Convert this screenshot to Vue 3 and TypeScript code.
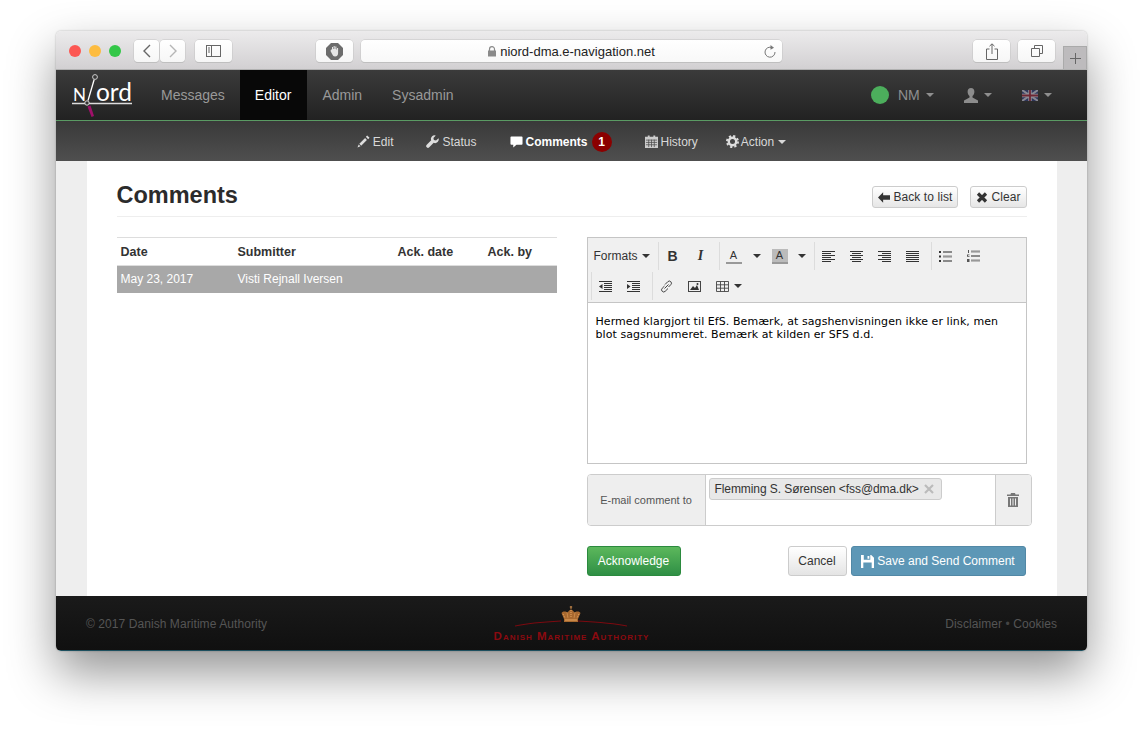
<template>
  <div class="page">
    <div class="window">
      <div class="titlebar">
        <div class="lights">
          <span class="light red"></span>
          <span class="light yellow"></span>
          <span class="light green"></span>
        </div>
        <div class="saf-pair">
          <span class="saf-btn nav-btn">
            <svg width="10" height="14" viewBox="0 0 10 14"><path d="M8 1 2 7l6 6" fill="none" stroke="#666" stroke-width="1.4" /></svg>
          </span>
          <span class="saf-btn nav-btn">
            <svg width="10" height="14" viewBox="0 0 10 14"><path d="m2 1 6 6-6 6" fill="none" stroke="#b5b5b5" stroke-width="1.4" /></svg>
          </span>
        </div>
        <span class="saf-btn side-btn">
          <svg width="15" height="12" viewBox="0 0 15 12">
            <rect x=".5" y=".5" width="14" height="11" fill="none" stroke="#666" />
            <path d="M5.5 0v12M2 3h2M2 5h2M2 7h2" stroke="#666" fill="none" />
          </svg>
        </span>
        <span class="saf-btn stop-btn">
          <svg width="17" height="17" viewBox="0 0 17 17">
            <path d="M5 0h7l5 5v7l-5 5H5l-5-5V5z" fill="#6c6c6c" />
            <path d="M5 6.5h1V4h1v2h.6V3h1.1v3h.6V3.5h1.1V6.6h.6V5h1.1v5c0 2-1 3.5-3 3.5S7 12.500 5.800 10.500L4.500 8z" fill="#e6e6e6" />
          </svg>
        </span>
        <div class="urlbar">
          <span class="url-text">
            <svg width="8" height="11" viewBox="0 0 8 11">
              <path d="M1.500 5V3.200a2.500 2.500 0 0 1 5 0V5" fill="none" stroke="#8a8a8a" stroke-width="1.200" />
              <rect y="4.500" width="8" height="6" fill="#8a8a8a" />
            </svg>
            niord-dma.e-navigation.net
          </span>
          <svg class="reload" width="12" height="13" viewBox="0 0 12 13">
            <path d="M8 2.600A5 5 0 1 0 11 7" fill="none" stroke="#777" />
            <path d="M6.500 0 10 2.700 6.500 4.800z" fill="#777" />
          </svg>
        </div>
        <span class="saf-btn share-btn">
          <svg width="12" height="17" viewBox="0 0 12 17">
            <path d="M3.500 6H.5v10.500h11V6h-3M6 11V1M3.500 3.200 6 .8l2.500 2.400" fill="none" stroke="#666" />
          </svg>
        </span>
        <span class="saf-btn tabs-btn">
          <svg width="12" height="12" viewBox="0 0 12 12">
            <path d="M3.500 3V.5h8v8H9M.5 3.500h8v8h-8z" fill="none" stroke="#666" />
          </svg>
        </span>
        <span class="new-tab">
          <svg width="11" height="11" viewBox="0 0 11 11"><path d="M5.500 0v11M0 5.500h11" stroke="#666" /></svg>
        </span>
      </div>

      <div class="navbar">
        <svg class="logo" width="62" height="50" viewBox="0 0 62 50">
          <text x="3" y="31" class="logo-text" font-size="18" textLength="13" lengthAdjust="spacingAndGlyphs">N</text>
          <text x="26" y="31" class="logo-text" font-size="25" textLength="36" lengthAdjust="spacingAndGlyphs">ord</text>
          <path d="M2 33.500h60" stroke="#ddd" stroke-width="1.300" />
          <path d="M24.200 9.500 18 30.500" stroke="#fff" stroke-width="1.300" />
          <circle cx="25" cy="7" r="2.400" fill="none" stroke="#ccc" />
          <circle cx="17" cy="33" r="2.200" fill="#333" stroke="#ddd" />
          <path d="M17.500 36.500 20.500 35.500 24 46 21.500 47z" fill="#a0106a" />
        </svg>
        <a v-for="item in mainNav" :key="item" :class="['nav-item', item === 'Editor' ? 'active' : '']">{{ item }}</a>
        <div class="nav-right">
          <span class="nav-drop status">
            <span class="dot"></span>
            NM
            <span class="caret"></span>
          </span>
          <span class="nav-drop user">
            <svg width="14" height="15" viewBox="0 0 14 15">
              <path d="M7 0c2.200 0 3.400 1.600 3.400 3.800 0 1.800-.8 3.500-1.900 4.300v1.300L14 12.500V15H0v-2.500l5.500-3.100V8.100C4.400 7.300 3.600 5.600 3.600 3.800 3.600 1.600 4.800 0 7 0z" fill="#8c8c8c" />
            </svg>
            <span class="caret"></span>
          </span>
          <span class="nav-drop lang">
            <svg class="flag" width="16" height="11" viewBox="0 0 16 11">
              <rect width="16" height="11" fill="#2f3a72" />
              <path d="m0 0 16 11M16 0 0 11" stroke="#b9b9c9" stroke-width="2" />
              <path d="M8 0v11M0 5.500h16" stroke="#c9c9d6" stroke-width="3.400" />
              <path d="M8 0v11M0 5.500h16" stroke="#8f2438" stroke-width="1.800" />
            </svg>
            <span class="caret"></span>
          </span>
        </div>
      </div>

      <div class="subnav">
        <a class="sub-item">
          <svg width="13" height="13" viewBox="0 0 14 14"><path d="m11 .5 2.500 2.500-1.500 1.500-2.500-2.500zM8.700 3.300l2 2-6.200 6.200-2-2zM1.800 10.200l2 2-3.300 1.300z" fill="#ddd" /></svg>
          Edit
        </a>
        <a class="sub-item">
          <svg width="13" height="13" viewBox="0 0 14 14"><path d="M13.500 3.500 10.800 6 8.500 5.500 8 3.200 10.500.5A3.900 3.900 0 0 0 5.600 5.700L.8 10.500a1.900 1.900 0 0 0 2.700 2.700l4.800-4.800a3.900 3.900 0 0 0 5.200-4.900z" fill="#ddd" /></svg>
          Status
        </a>
        <a class="sub-item current">
          <svg width="13" height="13" viewBox="0 0 14 14"><path d="M1.500 1.500h11a1 1 0 0 1 1 1v7a1 1 0 0 1-1 1H7l-3.500 3v-3h-2a1 1 0 0 1-1-1v-7a1 1 0 0 1 1-1z" fill="#fff" /></svg>
          Comments
          <span class="badge">1</span>
        </a>
        <a class="sub-item">
          <svg width="13" height="13" viewBox="0 0 14 14">
            <path d="M0 2h14v12H0z" fill="#ccc" />
            <path d="M1 5.500h12M1 8h12M1 10.500h12M4 5v8M7 5v8M10 5v8" stroke="#4a4a4a" stroke-width=".8" />
            <path d="M3 .5h2v3H3zM9 .5h2v3H9z" fill="#ccc" />
          </svg>
          History
        </a>
        <a class="sub-item action">
          <svg width="13" height="13" viewBox="0 0 14 14">
            <circle cx="7" cy="7" r="4" fill="none" stroke="#ddd" stroke-width="2.600" />
            <circle cx="7" cy="7" r="6" fill="none" stroke="#ddd" stroke-width="2" stroke-dasharray="2.400 2.310" />
          </svg>
          Action
          <span class="caret light-caret"></span>
        </a>
      </div>

      <div class="content">
        <div class="sheet">
          <div class="page-head">
            <h1>Comments</h1>
            <div class="head-btns">
              <button class="btn-sm">
                <svg width="12" height="11" viewBox="0 0 14 12"><path d="M0 6 6 0v3.500h8v5H6V12z" fill="#333" /></svg>
                Back to list
              </button>
              <button class="btn-sm">
                <svg width="12" height="11" viewBox="0 0 12 11"><path d="m2 1.500 8 8M10 1.500l-8 8" stroke="#333" stroke-width="3.200" /></svg>
                Clear
              </button>
            </div>
          </div>

          <div class="columns">
            <table class="comments">
              <thead>
                <tr>
                  <th class="c-date">Date</th>
                  <th class="c-sub">Submitter</th>
                  <th class="c-ackd">Ack. date</th>
                  <th>Ack. by</th>
                </tr>
              </thead>
              <tbody>
                <tr v-for="c in comments" :key="c.date" class="selected">
                  <td>{{ c.date }}</td>
                  <td>{{ c.submitter }}</td>
                  <td></td>
                  <td></td>
                </tr>
              </tbody>
            </table>

            <div class="compose">
              <div class="editor">
                <div class="toolbar">
                  <div class="tb-row">
                    <div class="tb-group first">
                      <span class="tb-btn formats">Formats<span class="tb-caret"></span></span>
                    </div>
                    <div class="tb-group">
                      <span class="tb-btn tb-b">B</span>
                      <span class="tb-btn tb-i">I</span>
                    </div>
                    <div class="tb-group">
                      <span class="tb-btn"><span class="tb-a">A</span></span>
                      <span class="tb-split wide"><span class="tb-caret"></span></span>
                      <span class="tb-btn"><span class="tb-a filled">A</span></span>
                      <span class="tb-split"><span class="tb-caret"></span></span>
                    </div>
                    <div class="tb-group">
                      <span v-for="(icon, i) in alignIcons" :key="i" class="tb-btn">
                        <svg width="13" height="11" viewBox="0 0 13 11">
                          <rect v-for="(l, j) in icon" :key="j" :x="l[0]" :y="j * 2" :width="l[1]" height="1" fill="#333" />
                        </svg>
                      </span>
                    </div>
                    <div class="tb-group">
                      <span class="tb-btn">
                        <svg width="13" height="11" viewBox="0 0 13 11">
                          <path d="M0 0h2v2H0zM0 4.500h2v2H0zM0 9h2v2H0z" fill="#333" />
                          <path d="M4 .5h9M4 1.500h9M4 5h9M4 6h9M4 9.500h9M4 10.500h9" stroke="#444" stroke-width=".6" />
                        </svg>
                      </span>
                      <span class="tb-btn">
                        <svg width="13" height="12" viewBox="0 0 13 12">
                          <path d="M1 0h1v3H1zM0 4.500h2.500v.8H1v.7h1.500v.8H0zM0 9h2.500v3H0z" fill="#555" />
                          <path d="M4 1h9M4 2h9M4 5.500h9M4 6.500h9M4 10h9M4 11h9" stroke="#444" stroke-width=".6" />
                        </svg>
                      </span>
                    </div>
                  </div>
                  <div class="tb-row">
                    <div class="tb-group">
                      <span class="tb-btn">
                        <svg width="13" height="11" viewBox="0 0 13 11">
                          <path d="M0 0h13v1H0zM5 2h8v1H5zM5 4h8v1H5zM5 6h8v1H5zM5 8h8v1H5zM0 10h13v1H0z" fill="#333" />
                          <path d="M3.500 3v5L0 5.500z" fill="#333" />
                        </svg>
                      </span>
                      <span class="tb-btn">
                        <svg width="13" height="11" viewBox="0 0 13 11">
                          <path d="M0 0h13v1H0zM5 2h8v1H5zM5 4h8v1H5zM5 6h8v1H5zM5 8h8v1H5zM0 10h13v1H0z" fill="#333" />
                          <path d="M0 3v5l3.500-2.500z" fill="#333" />
                        </svg>
                      </span>
                    </div>
                    <div class="tb-group">
                      <span class="tb-btn">
                        <svg width="13" height="13" viewBox="0 0 13 13" fill="none" stroke="#444">
                          <path d="M5 4.500 7.800 1.700a2 2 0 0 1 3 3L8.500 7" />
                          <path d="M8 8.500 5.200 11.300a2 2 0 0 1-3-3L4.500 6" />
                          <path d="M4.500 8.500l4-4" />
                        </svg>
                      </span>
                      <span class="tb-btn">
                        <svg width="13" height="11" viewBox="0 0 13 11">
                          <rect x=".5" y=".5" width="12" height="10" fill="none" stroke="#444" />
                          <path d="m2 9 3-4 2 2 2-3 2 5z" fill="#333" />
                          <circle cx="9.500" cy="3" r="1" fill="#333" />
                        </svg>
                      </span>
                      <span class="tb-btn narrow">
                        <svg width="13" height="11" viewBox="0 0 13 11">
                          <path d="M.5.500h12v10H.5zM.5 3.800h12M.5 7.200h12M4.500.500v10M8.500.500v10" fill="none" stroke="#444" stroke-width=".9" />
                        </svg>
                        <span class="tb-caret"></span>
                      </span>
                    </div>
                  </div>
                </div>
                <div class="editor-body">
                  <p>Hermed klargjort til EfS. Bemærk, at sagshenvisningen ikke er link, men blot sagsnummeret. Bemærk at kilden er SFS d.d.</p>
                </div>
              </div>

              <div class="mail-group">
                <span class="mail-label">E-mail comment to</span>
                <div class="mail-input">
                  <span class="chip">
                    Flemming S. Sørensen &lt;fss@dma.dk&gt;
                    <svg width="10" height="10" viewBox="0 0 10 10"><path d="m1 1 8 8M9 1 1 9" stroke="#bbb" stroke-width="2.200" /></svg>
                  </span>
                </div>
                <span class="mail-clear">
                  <svg width="12" height="14" viewBox="0 0 12 14">
                    <path d="M4 0h4l.5 1.500H12V3H0V1.500h3.500zM1 4h10v10H1z" fill="#777" />
                    <path d="M3.500 5.500v7M6 5.500v7M8.500 5.500v7" stroke="#eee" />
                  </svg>
                </span>
              </div>

              <div class="actions">
                <button class="btn btn-green">Acknowledge</button>
                <div class="actions-right">
                  <button class="btn btn-plain">Cancel</button>
                  <button class="btn btn-blue">
                    <svg width="13" height="13" viewBox="0 0 14 14">
                      <path fill-rule="evenodd" d="M0 0h11l3 3v11H0zM3 0v5h7V0zM7 1h2v3H7zM2.500 8v6h9V8z" fill="#fff" />
                    </svg>
                    Save and Send Comment
                  </button>
                </div>
              </div>
            </div>
          </div>
        </div>
      </div>

      <div class="footer">
        <span class="foot-left">© 2017 Danish Maritime Authority</span>
        <div class="foot-logo">
          <svg width="112" height="24" viewBox="0 0 112 24">
            <path d="M0 21c14-3 28-4 46-5M63 16c19 1 35 2 49 5" fill="none" stroke="#7c0a10" stroke-width="1.200" />
            <path d="M56 1v3M54.800 2h2.400" stroke="#c98a4a" stroke-width="1" />
            <path d="M49 17v-3l-2.500-6c2-2.500 4.500-1.500 6-.5 1-1.500 2.500-3 3.500-3s2.500 1.500 3.500 3c1.500-1 4-2 6 .5L63 14v3z" fill="#a8692f" />
            <path d="M48 9l2 4M52 7.500l1 6M56 5v8M60 7.500l-1 6M64 9l-2 4" stroke="#e9a862" stroke-width="1" stroke-dasharray="1 1" />
            <path d="M50 15h12" stroke="#e9a862" />
          </svg>
          <span class="foot-name">Danish Maritime Authority</span>
        </div>
        <span class="foot-right">Disclaimer <span class="bullet">•</span> Cookies</span>
      </div>
    </div>
  </div>
</template>

<script setup lang="ts">
interface CommentRow {
  date: string
  submitter: string
}

const mainNav: string[] = ['Messages', 'Editor', 'Admin', 'Sysadmin']

const comments: CommentRow[] = [
  { date: 'May 23, 2017', submitter: 'Visti Rejnall Iversen' }
]

// each line is [x, width], drawn two pixels apart
const alignIcons: number[][][] = [
  [[0, 13], [0, 9], [0, 13], [0, 9], [0, 13], [0, 9]],
  [[0, 13], [2, 9], [0, 13], [2, 9], [0, 13], [2, 9]],
  [[0, 13], [4, 9], [0, 13], [4, 9], [0, 13], [4, 9]],
  [[0, 13], [0, 13], [0, 13], [0, 13], [0, 13], [0, 13]]
]
</script>

<style>
html,
body {
  margin: 0;
  background: #fff;
  overflow: hidden;
}
</style>

<style scoped>
.page {
  height: 731px;
  box-sizing: border-box;
  padding: 31px 56px 0;
  font-family: "Liberation Sans", Arial, sans-serif;
  font-size: 14px;
  color: #333;
}

.window {
  width: 1031px;
  height: 620px;
  display: flex;
  flex-direction: column;
  border-radius: 5px;
  overflow: hidden;
  box-shadow: 0 22px 48px rgba(0, 0, 0, 0.42), 0 0 2px rgba(0, 0, 0, 0.3);
}

.titlebar {
  height: 39px;
  flex: none;
  box-sizing: border-box;
  position: relative;
  display: flex;
  align-items: center;
  padding: 2px 0 0 13px;
  background: linear-gradient(#ecebec, #d2d0d2);
  border-bottom: 1px solid #b1b1b1;
}

.lights {
  display: flex;
  gap: 8px;
  margin-right: 13px;
}

.light {
  width: 12px;
  height: 12px;
  border-radius: 50%;
}

.light.red { background: #fc5753; }
.light.yellow { background: #fdbc40; }
.light.green { background: #33c748; }

.saf-pair {
  display: flex;
  gap: 1px;
  margin-right: 10px;
}

.saf-btn {
  height: 22px;
  display: flex;
  align-items: center;
  justify-content: center;
  background: linear-gradient(#fff, #f6f6f6);
  border-radius: 4px;
  box-shadow: 0 0 0 0.5px #c4c4c4, 0 1px 0 #bbb;
}

.nav-btn { width: 25px; }
.side-btn { width: 37px; margin-right: 84px; }
.stop-btn { width: 37px; margin-right: 8px; }
.share-btn { width: 37px; margin-right: 8px; }
.tabs-btn { width: 37px; }

.urlbar {
  width: 421px;
  height: 22px;
  margin-right: 191px;
  position: relative;
  display: flex;
  align-items: center;
  justify-content: center;
  background: linear-gradient(#fff, #f8f8f8);
  border-radius: 4px;
  box-shadow: 0 0 0 0.5px #c4c4c4, 0 1px 0 #bbb;
  font-size: 13px;
  color: #222;
}

.url-text {
  display: flex;
  align-items: center;
  gap: 4px;
}

.reload {
  position: absolute;
  right: 6px;
  top: 5px;
}

.new-tab {
  position: absolute;
  right: 0;
  bottom: 0;
  width: 24px;
  height: 23px;
  display: flex;
  align-items: center;
  justify-content: center;
  background: #bdbbbd;
  border: 1px solid #aaa;
  border-bottom: 0;
  box-sizing: border-box;
}

.navbar {
  height: 50px;
  flex: none;
  display: flex;
  align-items: stretch;
  background: linear-gradient(#3b3b3b, #222);
}

.logo {
  margin: 0 14px;
}

.logo-text {
  font-family: Lato, "Open Sans", sans-serif;
  fill: #fff;
}

.nav-item {
  display: flex;
  align-items: center;
  padding: 0 15px;
  color: #999;
}

.nav-item.active {
  padding-right: 16px;
  color: #fff;
  background: #080808;
}

.nav-right {
  margin-left: auto;
  padding-right: 16px;
  display: flex;
  align-items: center;
}

.nav-drop {
  display: flex;
  align-items: center;
  color: #8f8f8f;
}

.status { gap: 0; width: 93px; }
.user { gap: 6px; width: 58px; }
.lang { gap: 6px; width: 49px; }

.flag {
  opacity: 0.65;
}

.dot {
  width: 18px;
  height: 18px;
  margin-right: 9px;
  border-radius: 50%;
  background: #4cae5c;
}

.caret {
  width: 0;
  height: 0;
  border-top: 4px solid #8f8f8f;
  border-left: 4px solid transparent;
  border-right: 4px solid transparent;
}

.status .caret {
  margin-left: 6px;
}

.subnav {
  height: 41px;
  flex: none;
  box-sizing: border-box;
  display: flex;
  align-items: center;
  justify-content: center;
  gap: 33px;
  padding: 1px 0 0;
  border-top: 1px solid #5a9a63;
  background: linear-gradient(#393939, #4f4f4f);
  font-size: 12px;
}

.sub-item {
  display: flex;
  align-items: center;
  gap: 3px;
  color: #d8d8d8;
}

.sub-item.current {
  color: #fff;
  font-weight: bold;
}

.sub-item.action {
  margin-left: -5px;
  gap: 2px;
}

.badge {
  width: 20px;
  height: 20px;
  margin-left: 1px;
  display: flex;
  align-items: center;
  justify-content: center;
  border-radius: 50%;
  background: #8b0000;
  color: #fff;
  font-size: 12px;
}

.light-caret {
  margin-left: 2px;
  border-top-color: #d8d8d8;
}

.content {
  flex: 1;
  display: flex;
  justify-content: center;
  background: #eee;
}

.sheet {
  width: 970px;
  box-sizing: border-box;
  padding: 0 30px;
  background: #fff;
}

.page-head {
  height: 56px;
  box-sizing: border-box;
  display: flex;
  align-items: center;
  justify-content: space-between;
  padding-top: 19px;
  padding-bottom: 2px;
  margin-bottom: 20px;
  border-bottom: 1px solid #eee;
}

h1 {
  margin: 0 0 4px;
  font-size: 23.5px;
  font-weight: bold;
  color: #2b2b2b;
}

.head-btns {
  display: flex;
  gap: 12px;
}

.btn-sm {
  height: 22px;
  padding: 0 5px;
  display: flex;
  align-items: center;
  gap: 3px;
  border: 1px solid #ccc;
  border-radius: 3px;
  background: linear-gradient(#fff, #e6e6e6);
  font: 12px "Liberation Sans", Arial, sans-serif;
  letter-spacing: 0.08px;
  color: #333;
}

.columns {
  display: grid;
  grid-template-columns: 440px 440px;
  gap: 30px;
  align-items: start;
}

.comments {
  width: 440px;
  border-collapse: collapse;
  table-layout: fixed;
  font-size: 12px;
}

.comments th {
  height: 27px;
  padding: 0 4px;
  text-align: left;
  font-size: 12.5px;
  font-weight: bold;
  color: #333;
  border-top: 1px solid #ddd;
  border-bottom: 1px solid #ddd;
}

.c-date { width: 109px; }
.c-sub { width: 152px; }
.c-ackd { width: 82px; }

.comments td {
  height: 26px;
  padding: 0 4px 1px;
}

.selected {
  background: #a8a8a8;
  color: #fff;
}

.compose {
  width: 440px;
}

.editor {
  box-sizing: border-box;
  height: 227px;
  display: flex;
  flex-direction: column;
  border: 1px solid #c5c5c5;
}

.toolbar {
  flex: none;
  padding: 4px 0 2px;
  display: flex;
  flex-direction: column;
  gap: 2px;
  background: #f0f0f0;
  border-bottom: 1px solid #c5c5c5;
}

.tb-row {
  height: 28px;
  display: flex;
  padding-left: 3px;
}

.tb-group {
  display: flex;
  padding-right: 4px;
  border-left: 1px solid #dcdcdc;
}

.tb-group.first {
  border-left-color: transparent;
}

.tb-btn {
  width: 28px;
  display: flex;
  align-items: center;
  justify-content: center;
  color: #333;
}

.tb-btn.formats {
  width: 62px;
  padding-left: 2px;
  box-sizing: border-box;
  justify-content: flex-start;
  font-size: 12px;
}

.tb-btn.narrow {
  width: 38px;
  gap: 5px;
  justify-content: flex-start;
  padding-left: 7px;
}

.tb-b {
  font-size: 14px;
  font-weight: bold;
}

.tb-i {
  font: italic bold 14px "Liberation Serif", serif;
}

.tb-a {
  width: 16px;
  height: 15px;
  box-sizing: border-box;
  text-align: center;
  font-size: 11px;
  line-height: 13px;
  border-bottom: 2px solid #999;
}

.tb-a.filled {
  background: #bbb;
}

.tb-split {
  width: 16px;
  display: flex;
  align-items: center;
  justify-content: center;
}

.tb-split.wide {
  width: 18px;
}

.tb-caret {
  display: inline-block;
  width: 0;
  height: 0;
  margin-left: 4px;
  border-top: 4px solid #333;
  border-left: 4px solid transparent;
  border-right: 4px solid transparent;
}

.tb-split .tb-caret,
.narrow .tb-caret {
  margin-left: 0;
}

.editor-body {
  flex: 1;
  padding: 12px 8px 0;
  background: #fff;
  font: 11px/13px "DejaVu Sans", Verdana, sans-serif;
  letter-spacing: 0.07px;
  color: #000;
}

.editor-body p {
  margin: 0;
}

.mail-group {
  width: 445px;
  height: 52px;
  margin-top: 10px;
  box-sizing: border-box;
  display: flex;
  border: 1px solid #ccc;
  border-radius: 4px;
  overflow: hidden;
}

.mail-label {
  width: 118px;
  box-sizing: border-box;
  display: flex;
  align-items: center;
  justify-content: center;
  background: #eee;
  border-right: 1px solid #ccc;
  font-size: 11px;
  color: #555;
}

.mail-input {
  flex: 1;
  padding: 3px;
}

.chip {
  width: 233px;
  height: 22px;
  box-sizing: border-box;
  padding: 0 7px 0 5px;
  display: flex;
  align-items: center;
  justify-content: space-between;
  background: #e8e8e8;
  border: 1px solid #ccc;
  border-radius: 3px;
  font-size: 12px;
  letter-spacing: -0.08px;
  color: #333;
}

.mail-clear {
  width: 36px;
  box-sizing: border-box;
  display: flex;
  align-items: center;
  justify-content: center;
  background: #eee;
  border-left: 1px solid #ccc;
}

.actions {
  margin-top: 20px;
  padding-right: 1px;
  display: flex;
  justify-content: space-between;
}

.actions-right {
  display: flex;
  gap: 4px;
}

.btn {
  height: 30px;
  padding: 0 9px;
  display: flex;
  align-items: center;
  gap: 3px;
  border-radius: 3px;
  font: 12px "Liberation Sans", Arial, sans-serif;
}

.btn-green {
  width: 94px;
  justify-content: center;
  padding: 0;
  color: #fff;
  background: linear-gradient(#5cb85c, #2f8f45);
  border: 1px solid #2b8a3e;
}

.btn-plain {
  width: 59px;
  justify-content: center;
  padding: 0;
  color: #333;
  background: linear-gradient(#fff, #e4e4e4);
  border: 1px solid #ccc;
}

.btn-blue {
  width: 175px;
  justify-content: center;
  padding: 0;
  color: #fff;
  background: #5d97b6;
  border: 1px solid #5288a6;
}

.footer {
  height: 55px;
  flex: none;
  box-sizing: border-box;
  padding: 1px 30px 0;
  display: grid;
  grid-template-columns: 1fr auto 1fr;
  align-items: center;
  background: linear-gradient(#1a1a1a, #101010);
  border-bottom: 1px solid #1d4f5e;
  font-size: 12px;
  letter-spacing: 0.07px;
  color: #555;
}

.foot-right {
  text-align: right;
}

.foot-logo {
  align-self: start;
  display: flex;
  flex-direction: column;
  align-items: center;
  padding-top: 8px;
}

.foot-name {
  margin-top: 1px;
  font-size: 11.5px;
  font-weight: bold;
  font-variant: small-caps;
  letter-spacing: 1px;
  line-height: 12px;
  color: #8b0a10;
}

.bullet {
  color: #444;
}
</style>
